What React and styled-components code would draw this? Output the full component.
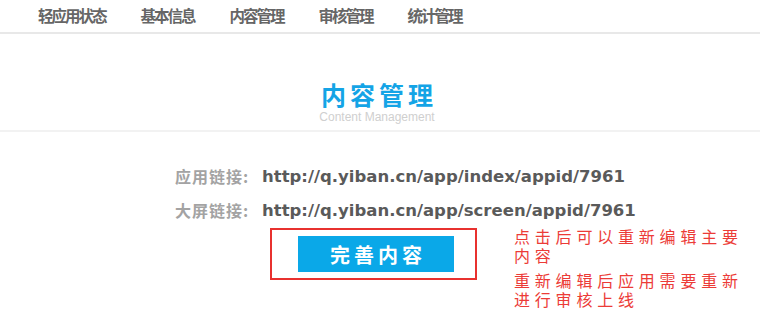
import styled, { createGlobalStyle } from 'styled-components'

const GlobalStyle = createGlobalStyle`
    body {
        margin: 0;
        background: #fff;
        font-family: "Noto Sans CJK SC", "DejaVu Sans", sans-serif;
    }
`

const Nav = styled.div`
    display: flex;
    gap: 35px;
    height: 32px;
    align-items: center;
    padding-left: 38px;
    border-bottom: 2px solid #e8e8e8;
    .tab {
        font-size: 15.5px;
        font-weight: 700;
        color: #666;
        letter-spacing: -2px;
        line-height: 1;
    }
`

const Heading = styled.div`
    display: flex;
    flex-direction: column;
    align-items: center;
    padding: 46px 0 6px 0;
    margin-left: -6px;
    border-bottom: 2px solid #f2f2f2;
    .title {
        font-size: 25px;
        font-weight: 700;
        color: #14a4e6;
        letter-spacing: 4px;
        margin-right: -4px;
        line-height: 28px;
    }
    .sub {
        font-family: "Liberation Sans", Arial, sans-serif;
        font-size: 12px;
        color: #cfcfcf;
        line-height: 14px;
        margin-top: 2px;
    }
`

const Links = styled.div`
    padding: 33px 0 0 175px;
    display: flex;
    flex-direction: column;
    gap: 12px;
`

const LinkRow = styled.div`
    display: flex;
    align-items: center;
    height: 22px;
    .label {
        font-size: 16px;
        font-weight: 700;
        color: #a3a3a3;
        letter-spacing: 1px;
        width: 87px;
    }
    .value {
        font-family: "DejaVu Sans", sans-serif;
        font-size: 16.5px;
        font-weight: 700;
        color: #5a5a5a;
    }
`

const ActionRow = styled.div`
    display: flex;
    align-items: flex-start;
    padding: 7px 0 0 270px;
`

const Frame = styled.div`
    width: 198px;
    height: 48px;
    border: 2px solid #e8312f;
    display: flex;
    align-items: center;
    justify-content: center;
    margin-right: 37px;
    padding-left: 5px;
    box-sizing: content-box;
`

const Button = styled.button`
    width: 156px;
    height: 36px;
    border: none;
    background: #0aa8e8;
    color: #fff;
    font-family: "Noto Sans CJK SC", sans-serif;
    font-size: 20px;
    font-weight: 700;
    letter-spacing: 4px;
    padding: 0 0 0 4px;
    cursor: pointer;
`

const Notes = styled.div`
    width: 236px;
    color: #ec3b37;
    font-size: 16px;
    letter-spacing: 4.8px;
    line-height: 19px;
    margin-top: -1px;
    p {
        margin: 0 0 6px 0;
    }
`

export default function App() {
    return (
        <>
            <GlobalStyle />
            <Nav>
                <span className="tab">轻应用状态</span>
                <span className="tab">基本信息</span>
                <span className="tab">内容管理</span>
                <span className="tab">审核管理</span>
                <span className="tab">统计管理</span>
            </Nav>
            <Heading>
                <div className="title">内容管理</div>
                <div className="sub">Content Management</div>
            </Heading>
            <Links>
                <LinkRow>
                    <span className="label">应用链接:</span>
                    <span className="value">http://q.yiban.cn/app/index/appid/7961</span>
                </LinkRow>
                <LinkRow>
                    <span className="label">大屏链接:</span>
                    <span className="value">http://q.yiban.cn/app/screen/appid/7961</span>
                </LinkRow>
            </Links>
            <ActionRow>
                <Frame>
                    <Button>完善内容</Button>
                </Frame>
                <Notes>
                    <p>点击后可以重新编辑主要内容</p>
                    <p>重新编辑后应用需要重新进行审核上线</p>
                </Notes>
            </ActionRow>
        </>
    )
}
